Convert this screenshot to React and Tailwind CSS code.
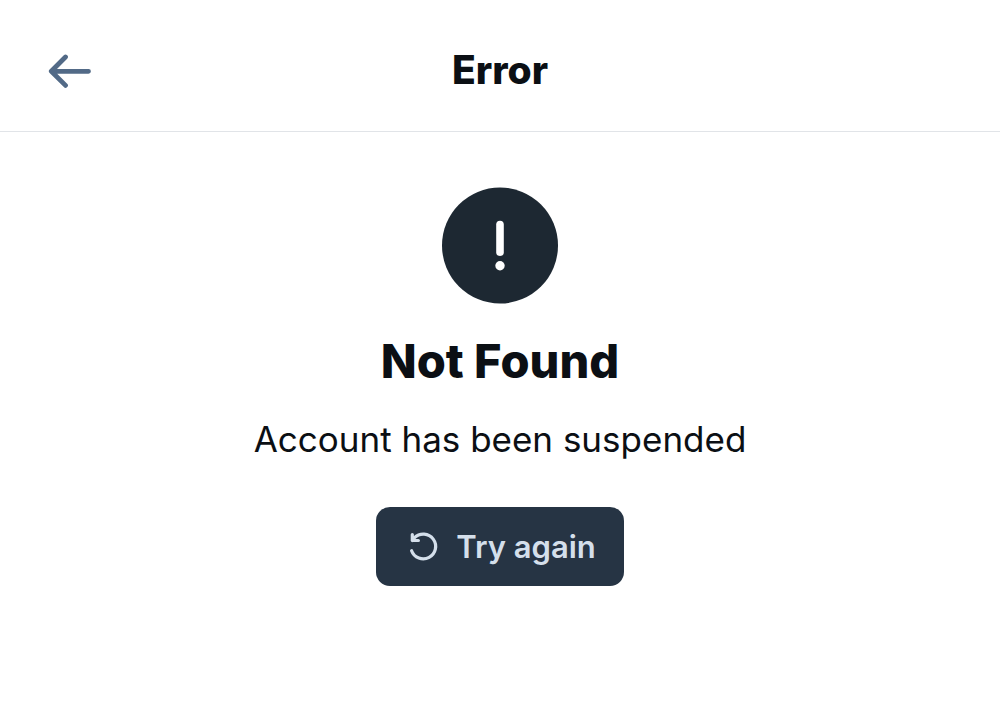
export default function App() {
  return (
    <div className="min-h-screen bg-white font-['Inter',sans-serif] text-[#0b0f14]">
      <header className="grid h-[132px] grid-cols-[1fr_auto_1fr] items-center border-b border-[#e1e4e8] px-12 pt-2">
        <button type="button" aria-label="Go back" className="justify-self-start text-[#526a87]">
          <svg className="h-9 w-11" viewBox="0 0 44 36" fill="none" stroke="currentColor" strokeWidth="4.800" strokeLinecap="round" strokeLinejoin="round" aria-hidden="true">
            <path d="M40.500 19.300H3.300M17.500 5L3.300 19.300L17.500 33.400" />
          </svg>
        </button>
        <h1 className="text-[39px] leading-[46px] font-extrabold">Error</h1>
      </header>
      <main className="flex flex-col items-center px-8 pt-[55px] pb-12 text-center">
        <svg className="h-[117px] w-[116px]" viewBox="0 0 116 117" aria-hidden="true">
          <circle cx="58" cy="58.500" r="58" fill="#1d2832" />
          <path d="M58 37.500V65.200" stroke="white" strokeWidth="7.600" strokeLinecap="round" />
          <circle cx="58" cy="78.700" r="4.700" fill="white" />
        </svg>
        <h2 className="mt-[27px] text-[47px] leading-15 font-extrabold">Not Found</h2>
        <p className="mt-6 text-[35px] leading-12">Account has been suspended</p>
        <button type="button" className="mt-11 flex h-[79px] items-center gap-4 rounded-[14px] bg-[#263444] px-7 text-[#d4dfeb]">
          <svg className="h-8 w-9" viewBox="0 0 36 32" fill="none" stroke="currentColor" strokeWidth="3.200" strokeLinecap="round" strokeLinejoin="round" aria-hidden="true">
            <path d="M8.300 3.500V9.500H14.400M8.300 9.500L10.500 6.700A12.400 12.400 0 1 1 7.600 19.700" />
          </svg>
          <span className="text-[31px] leading-10 font-semibold">Try again</span>
        </button>
      </main>
    </div>
  );
}
